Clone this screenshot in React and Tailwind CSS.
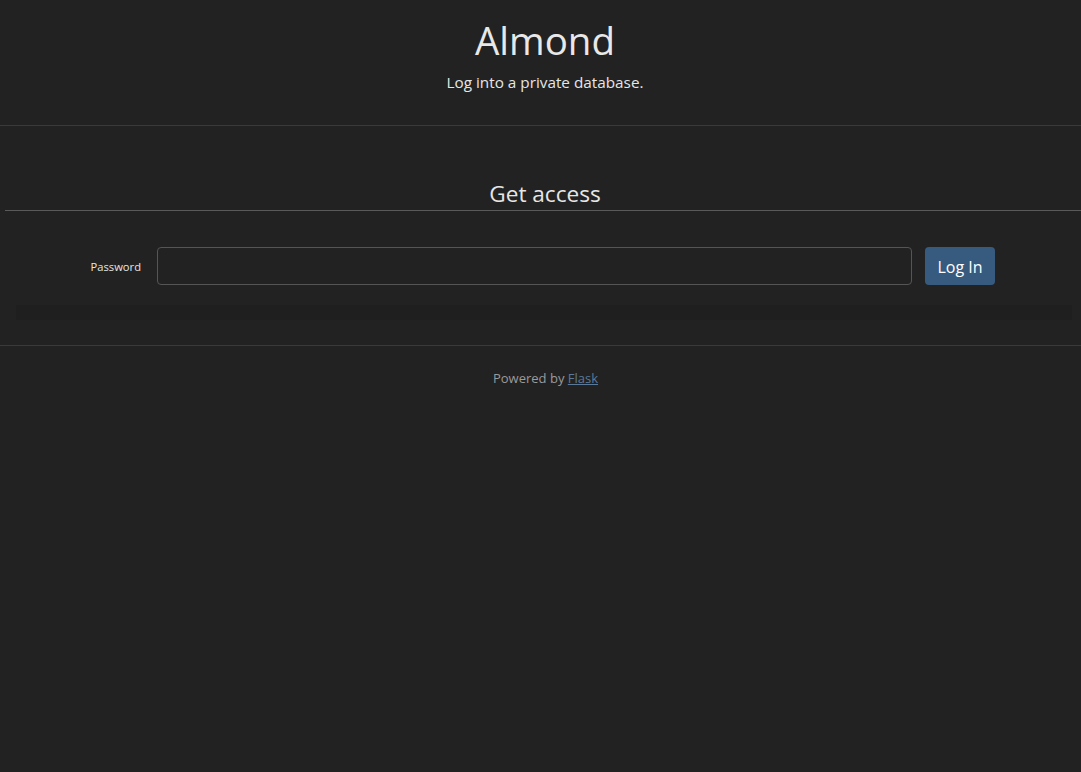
export default function App() {
  return (
    <div className="min-h-[772px] bg-[#222222] text-[#e6e6e6]" style={{ fontFamily: '"Open Sans", "Noto Sans", sans-serif' }}>
      {/* Header */}
      <header className="flex flex-col items-center pl-[9px] pt-4 pb-[31px] border-b border-[#3a3a3a]">
        <h1 className="text-[38.5px] leading-[48px] text-[#e8e8e8]">Almond</h1>
        <p className="mt-[6px] text-[15.3px] leading-6 text-[#e6e6e6]">Log into a private database.</p>
      </header>

      {/* Login */}
      <section className="pt-[53px]">
        <h2 className="ml-[5px] pl-1 pb-[2px] border-b border-[#5a5a5a] text-center text-[22.6px] leading-[29px] text-[#e6e6e6]">
          Get access
        </h2>
        <form className="flex items-center pt-[36px] pl-[85px] pr-[86px]" onSubmit={e => e.preventDefault()}>
          <label className="w-[56px] pt-[3px] text-right text-[11.2px] text-[#e6e6e6]">Password</label>
          <input
            type="password"
            className="ml-4 h-[38px] flex-1 rounded-[4px] border border-[#555555] bg-[#222222] px-3 text-sm text-white focus:outline-none"
          />
          <button className="ml-[13px] h-[38px] w-[70px] rounded-[4px] bg-[#375a7f] pt-[2px] text-[16px] text-white">
            Log In
          </button>
        </form>
        <div className="mx-4 mt-5 mr-[9px] h-[15px] bg-[#1f1f1f]" />
      </section>

      {/* Footer */}
      <footer className="mt-[25px] border-t border-[#3a3a3a] pl-[10px] pt-[22px] text-center text-[13px] leading-5 text-[#9a9a9a]">
        Powered by <a href="#" className="text-[#5b7a99] underline">Flask</a>
      </footer>
    </div>
  );
}
